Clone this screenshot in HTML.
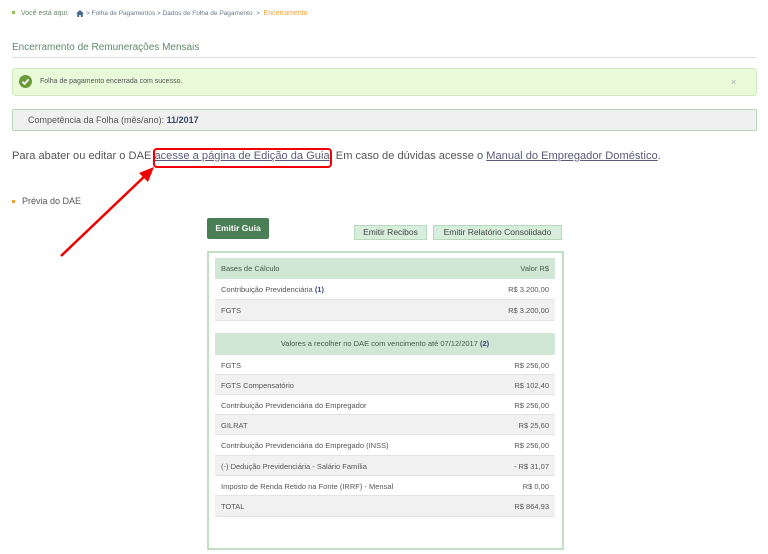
<!DOCTYPE html>
<html><head><meta charset="utf-8"><style>
*{margin:0;padding:0;box-sizing:border-box}
body{width:768px;height:554px;background:#fff;font-family:"Liberation Sans",sans-serif;position:relative;overflow:hidden;color:#555}
.a{position:absolute}
.row{position:absolute;left:215px;width:340px;height:21px;font-size:7.5px;color:#555;border-bottom:1px solid #e4e4e4}
.row span{position:absolute;top:6px}
.row .l{left:6px}.row .r{right:6px}
.w{background:#fff}.g{background:#f1f1f1}
</style></head><body>
<div class="a" style="left:12px;top:11px;width:3px;height:3px;background:#8fbf5a"></div>
<div class="a" style="left:21px;top:10px;font-size:7px;color:#6a8a6a">Você está aqui:</div>
<svg class="a" style="left:76px;top:10px" width="8" height="7" viewBox="0 0 8 7"><path d="M4 0L0 3.5H1.2V7H3.2V5H4.8V7H6.8V3.5H8Z" fill="#4a6a8a"/></svg>
<div class="a" style="left:86px;top:10px;font-size:6.5px;color:#6a7a8a">&gt;&nbsp;Folha de Pagamentos &gt; Dados de Folha de Pagamento &nbsp;&gt;&nbsp; <span style="color:#f0a030;font-size:7px">Encerramento</span></div>

<div class="a" style="left:12px;top:42px;font-size:10px;color:#5e8a6a">Encerramento de Remunerações Mensais</div>
<div class="a" style="left:12px;top:57px;width:745px;height:1px;background:#d8dcea"></div>

<div class="a" style="left:12px;top:68px;width:745px;height:28px;background:#e8fad8;border:1px solid #d3e8c0;border-radius:3px"></div>
<div class="a" style="left:19px;top:75px;width:13px;height:13px;border-radius:50%;background:#6a9a3a"></div>
<svg class="a" style="left:19px;top:75px" width="13" height="13"><path d="M3.5 6.8L5.6 8.8L9.6 4.4" stroke="#fff" stroke-width="1.8" fill="none"/></svg>
<div class="a" style="left:40px;top:78px;font-size:7px;color:#555">Folha de pagamento encerrada com sucesso.</div>
<div class="a" style="left:731px;top:77px;font-size:9px;color:#aaa">×</div>

<div class="a" style="left:12px;top:109px;width:745px;height:22px;background:#f0f0f0;border:1px solid #b5d3b5;border-radius:2px"></div>
<div class="a" style="left:28px;top:115px;font-size:9px;color:#555">Competência da Folha (mês/ano): <b style="color:#3a4a6a">11/2017</b></div>

<div class="a" style="left:12px;top:150px;font-size:11.1px;color:#555;white-space:nowrap">Para abater ou editar o DAE <span style="text-decoration:underline;color:#5a5a7a">acesse a página de Edição da Guia</span>. Em caso de dúvidas acesse o <span style="text-decoration:underline;color:#5a5a7a">Manual do Empregador Doméstico</span>.</div>
<div class="a" style="left:153px;top:148px;width:179px;height:20px;border:2.5px solid #e00;border-radius:4px"></div>
<svg class="a" style="left:55px;top:162px" width="105" height="100"><line x1="6" y1="94" x2="92" y2="12" stroke="#e00" stroke-width="2.5"/><path d="M99 5L84 11L93 20Z" fill="#e00"/></svg>

<div class="a" style="left:12px;top:200px;width:3px;height:3px;background:#f0a030"></div>
<div class="a" style="left:22px;top:196px;font-size:9px;color:#555">Prévia do DAE</div>

<div class="a" style="left:207px;top:218px;width:62px;height:21px;background:#4a7f55;border-radius:2px;color:#fff;font-size:8.5px;font-weight:bold;text-align:center;line-height:20px">Emitir Guia</div>
<div class="a" style="left:354px;top:225px;width:73px;height:15px;background:#d6eedb;border:1px solid #b8d8be;font-size:8.5px;color:#444;text-align:center;line-height:13px">Emitir Recibos</div>
<div class="a" style="left:433px;top:225px;width:129px;height:15px;background:#d6eedb;border:1px solid #b8d8be;font-size:8.5px;color:#444;text-align:center;line-height:13px">Emitir Relatório Consolidado</div>

<div class="a" style="left:207px;top:251px;width:357px;height:299px;border:2px solid #c2dfc6"></div>

<div class="row" style="top:258px;background:#cfe7d4;border:none"><span class="l" style="color:#4a5a4a">Bases de Cálculo</span><span class="r" style="color:#4a5a4a">Valor R$</span></div>
<div class="row w" style="top:279px"><span class="l">Contribuição Previdenciária <b style="color:#3a4a7a">(1)</b></span><span class="r">R$ 3.200,00</span></div>
<div class="row g" style="top:300px"><span class="l">FGTS</span><span class="r">R$ 3.200,00</span></div>

<div class="row" style="top:333px;height:22px;background:#cfe7d4;border:none"><span style="left:0;right:0;text-align:center;color:#4a5a4a">Valores a recolher no DAE com vencimento até 07/12/2017 <b style="color:#3a4a7a">(2)</b></span></div>
<div class="row w" style="top:355px;height:20px"><span class="l">FGTS</span><span class="r">R$ 256,00</span></div>
<div class="row g" style="top:375px;height:20px"><span class="l">FGTS Compensatório</span><span class="r">R$ 102,40</span></div>
<div class="row w" style="top:395px;height:20px"><span class="l">Contribuição Previdenciária do Empregador</span><span class="r">R$ 256,00</span></div>
<div class="row g" style="top:415px;height:20px"><span class="l">GILRAT</span><span class="r">R$ 25,60</span></div>
<div class="row w" style="top:435px;height:21px"><span class="l">Contribuição Previdenciária do Empregado (INSS)</span><span class="r">R$ 256,00</span></div>
<div class="row g" style="top:456px;height:20px"><span class="l">(-) Dedução Previdenciária - Salário Família</span><span class="r">- R$ 31,07</span></div>
<div class="row w" style="top:476px;height:20px"><span class="l">Imposto de Renda Retido na Fonte (IRRF) - Mensal</span><span class="r">R$ 0,00</span></div>
<div class="row g" style="top:496px;height:21px"><span class="l">TOTAL</span><span class="r">R$ 864,93</span></div>
</body></html>
